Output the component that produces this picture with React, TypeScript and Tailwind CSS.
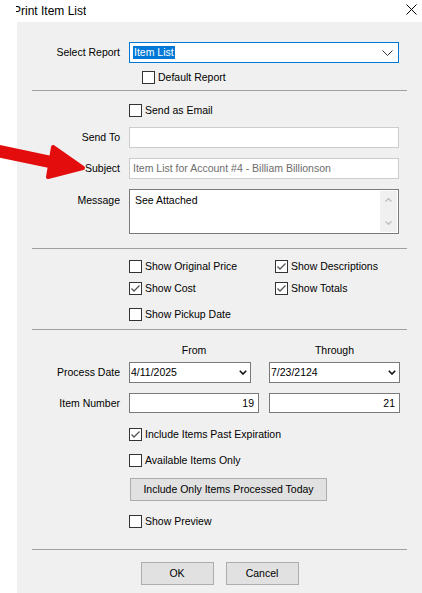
import React from "react";

const font = { fontFamily: '"Liberation Sans", Arial, sans-serif' };

function CheckBox({ checked = false, label }: { checked?: boolean; label: string }) {
  return (
    <div className="flex items-center h-[13px]">
      <div className="w-[13px] h-[13px] border border-[#333333] bg-white flex items-center justify-center shrink-0">
        {checked && (
          <svg width="11" height="11" viewBox="0 0 11 11">
            <polyline points="1.5,5.5 4,8 9.5,2.5" fill="none" stroke="#555555" strokeWidth="1.3" />
          </svg>
        )}
      </div>
      <span className="ml-[3px] text-[10.5px] leading-none text-black whitespace-nowrap">{label}</span>
    </div>
  );
}

function Label({ children, top = false }: { children: React.ReactNode; top?: boolean }) {
  return (
    <div
      className={`w-[103px] shrink-0 text-right text-[10.5px] leading-none text-black ${
        top ? "pt-[6px]" : "self-center"
      }`}
    >
      {children}
    </div>
  );
}

function Separator({ className = "" }: { className?: string }) {
  return <div className={`mx-[15px] h-px bg-[#a0a0a0] ${className}`} />;
}

function SmallChevron({ bold = false }: { bold?: boolean }) {
  return bold ? (
    <svg width="8" height="5" viewBox="0 0 8 5">
      <polyline points="0.8,0.8 4,4 7.2,0.8" fill="none" stroke="#111111" strokeWidth="1.6" />
    </svg>
  ) : (
    <svg width="11" height="6" viewBox="0 0 11 6">
      <polyline points="0.5,0.5 5.5,5.5 10.5,0.5" fill="none" stroke="#333333" strokeWidth="1" />
    </svg>
  );
}

function DateBox({ value, width }: { value: string; width: string }) {
  return (
    <div className={`${width} h-[21px] border border-[#7a7a7a] bg-white flex items-center justify-between pl-[1px] pr-[3px]`}>
      <span className="text-[10.5px] leading-none text-black">{value}</span>
      <SmallChevron bold />
    </div>
  );
}

function NumberBox({ value, width }: { value: string; width: string }) {
  return (
    <div className={`${width} h-[20px] border border-[#7a7a7a] bg-white flex items-center justify-end pr-[4px]`}>
      <span className="text-[10.5px] leading-none text-black">{value}</span>
    </div>
  );
}

function WinButton({ children, className = "" }: { children: React.ReactNode; className?: string }) {
  return (
    <div
      className={`h-[23px] border border-[#adadad] bg-[#e1e1e1] flex items-center justify-center text-[10.5px] leading-none text-black ${className}`}
    >
      {children}
    </div>
  );
}

export default function App() {
  return (
    <div className="relative w-[422px] h-[593px] bg-white overflow-hidden flex flex-col" style={font}>
      {/* title bar */}
      <div className="h-[22px] shrink-0 flex items-center justify-between">
        <div className="ml-[16px] overflow-hidden">
          <div className="-ml-[3px] text-[12px] leading-none text-black whitespace-nowrap">Print Item List</div>
        </div>
        <svg className="mr-[5px] -mt-[3px]" width="11" height="11" viewBox="0 0 11 11">
          <line x1="0.5" y1="0.5" x2="10.5" y2="10.5" stroke="#000" strokeWidth="1" />
          <line x1="10.5" y1="0.5" x2="0.5" y2="10.5" stroke="#000" strokeWidth="1" />
        </svg>
      </div>

      {/* dialog body */}
      <div className="ml-[17px] flex-1 bg-[#f0f0f0] flex flex-col">
        {/* report selection */}
        <div className="mt-[20px] flex gap-[9px] h-[21px]">
          <Label>Select Report</Label>
          <div className="w-[270px] h-[21px] border border-[#0078d7] bg-white flex items-center justify-between pl-[3px] pr-[5px]">
            <span className="bg-[#0078d7] text-white text-[10.5px] leading-none h-[13px] flex items-center px-[1px]">
              Item List
            </span>
            <SmallChevron />
          </div>
        </div>
        <div className="mt-[8px] pl-[125px]">
          <CheckBox label="Default Report" />
        </div>

        <Separator className="mt-[6px]" />

        {/* email */}
        <div className="mt-[13px] pl-[112px]">
          <CheckBox label="Send as Email" />
        </div>
        <div className="mt-[10px] flex gap-[9px] h-[21px]">
          <Label>Send To</Label>
          <div className="w-[270px] h-[21px] border border-[#cccccc] bg-white" />
        </div>
        <div className="mt-[10px] flex gap-[9px] h-[21px]">
          <Label>Subject</Label>
          <div className="w-[270px] h-[21px] border border-[#cccccc] bg-white flex items-center pl-[3px]">
            <span className="text-[10.5px] leading-none text-[#6d6d6d] whitespace-nowrap">
              Item List for Account #4 - Billiam Billionson
            </span>
          </div>
        </div>
        <div className="mt-[10px] flex gap-[9px] h-[45px]">
          <Label top>Message</Label>
          <div className="w-[270px] h-[45px] border border-[#7a7a7a] bg-white flex justify-between">
            <span className="pl-[5px] pt-[5px] text-[10.5px] leading-none text-black">See Attached</span>
            <div className="w-[17px] mr-[1px] my-[1px] bg-[#f0f0f0] flex flex-col items-center justify-between py-[7px]">
              <svg width="7" height="4" viewBox="0 0 7 4">
                <polyline points="0.5,3.5 3.5,0.7 6.5,3.5" fill="none" stroke="#c0c0c0" strokeWidth="1.4" />
              </svg>
              <svg width="7" height="4" viewBox="0 0 7 4">
                <polyline points="0.5,0.5 3.5,3.3 6.5,0.5" fill="none" stroke="#c0c0c0" strokeWidth="1.4" />
              </svg>
            </div>
          </div>
        </div>

        <Separator className="mt-[14px]" />

        {/* display options */}
        <div className="mt-[11px] pl-[112px] grid grid-cols-[146px_auto]">
          <CheckBox label="Show Original Price" />
          <CheckBox checked label="Show Descriptions" />
        </div>
        <div className="mt-[9px] pl-[112px] grid grid-cols-[146px_auto]">
          <CheckBox checked label="Show Cost" />
          <CheckBox checked label="Show Totals" />
        </div>
        <div className="mt-[13px] pl-[112px]">
          <CheckBox label="Show Pickup Date" />
        </div>

        <Separator className="mt-[8px]" />

        {/* range filters */}
        <div className="mt-[13px] h-[14px] flex text-[10.5px] leading-none text-black items-center">
          <div className="w-[112px]" />
          <div className="w-[130px] text-center">From</div>
          <div className="w-[10px]" />
          <div className="w-[131px] text-center">Through</div>
        </div>
        <div className="mt-[5px] flex h-[21px]">
          <Label>Process Date</Label>
          <div className="ml-[9px]">
            <DateBox value="4/11/2025" width="w-[122px]" />
          </div>
          <div className="ml-[18px]">
            <DateBox value="7/23/2124" width="w-[131px]" />
          </div>
        </div>
        <div className="mt-[10px] flex h-[20px]">
          <Label>Item Number</Label>
          <div className="ml-[9px]">
            <NumberBox value="19" width="w-[130px]" />
          </div>
          <div className="ml-[10px]">
            <NumberBox value="21" width="w-[131px]" />
          </div>
        </div>
        <div className="mt-[15px] pl-[112px]">
          <CheckBox checked label="Include Items Past Expiration" />
        </div>
        <div className="mt-[13px] pl-[112px]">
          <CheckBox label="Available Items Only" />
        </div>
        <div className="mt-[11px] pl-[113px]">
          <WinButton className="w-[197px]">Include Only Items Processed Today</WinButton>
        </div>
        <div className="mt-[14px] pl-[112px]">
          <CheckBox label="Show Preview" />
        </div>

        <Separator className="mt-[21px]" />

        {/* actions */}
        <div className="mt-[12px] flex justify-center gap-[12px]">
          <WinButton className="w-[73px]">OK</WinButton>
          <WinButton className="w-[73px]">Cancel</WinButton>
        </div>
      </div>

      {/* red annotation arrow pointing at the Subject field */}
      <svg className="absolute left-0 top-[138px]" width="92" height="46" viewBox="0 138 92 46">
        <line x1="-4" y1="150.5" x2="60" y2="164" stroke="#e30d0d" strokeWidth="12.5" strokeLinecap="round" />
        <polygon
          points="53,147 83,168 48,177"
          fill="#e30d0d"
          stroke="#e30d0d"
          strokeWidth="4"
          strokeLinejoin="round"
        />
      </svg>
    </div>
  );
}
